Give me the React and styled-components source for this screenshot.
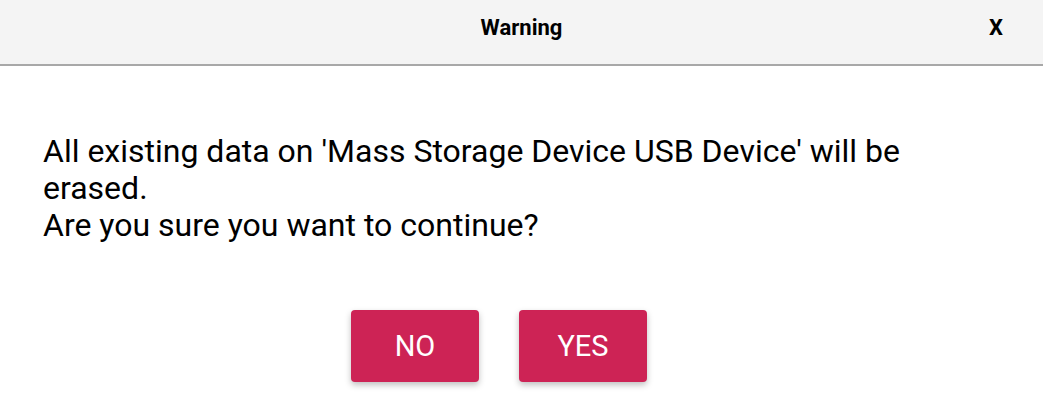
import React from "react";
import styled, { createGlobalStyle } from "styled-components";

const Global = createGlobalStyle`
  html, body {
    margin: 0;
    padding: 0;
    background: #ffffff;
    font-family: Roboto, "Liberation Sans", sans-serif;
  }
`;

const Dialog = styled.div`
  width: 1043px;
  height: 404px;
  display: flex;
  flex-direction: column;
  background: #ffffff;
`;

const Header = styled.div`
  height: 64px;
  background: #f4f4f4;
  border-bottom: 2px solid #a8a8a8;
  display: grid;
  grid-template-columns: 1fr auto 1fr;
  align-items: center;
`;

const Title = styled.div`
  grid-column: 2;
  font-size: 22px;
  font-weight: 700;
  color: #000;
  padding-bottom: 10px;
`;

const Close = styled.div`
  grid-column: 3;
  justify-self: end;
  margin-right: 40px;
  font-size: 22px;
  font-weight: 700;
  color: #000;
  padding-bottom: 10px;
  cursor: pointer;
`;

const Body = styled.div`
  padding: 67px 43px 0 43px;
  max-width: 900px;
  font-size: 32px;
  line-height: 37px;
  color: #000;
`;

const Actions = styled.div`
  display: flex;
  justify-content: center;
  gap: 40px;
  padding-right: 45px;
  margin-top: 66px;
`;

const Button = styled.button`
  width: 128px;
  height: 72px;
  border: none;
  border-radius: 4px;
  background: #cd2355;
  color: #ffffff;
  font-family: Roboto, "Liberation Sans", sans-serif;
  font-size: 29px;
  box-shadow: 0 3px 6px rgba(0, 0, 0, 0.25);
  cursor: pointer;
`;

export default function App() {
  return (
    <>
      <Global />
      <Dialog>
        <Header>
          <Title>Warning</Title>
          <Close>X</Close>
        </Header>
        <Body>
          All existing data on 'Mass Storage Device USB Device' will be erased.
          <br />
          Are you sure you want to continue?
        </Body>
        <Actions>
          <Button>NO</Button>
          <Button>YES</Button>
        </Actions>
      </Dialog>
    </>
  );
}
